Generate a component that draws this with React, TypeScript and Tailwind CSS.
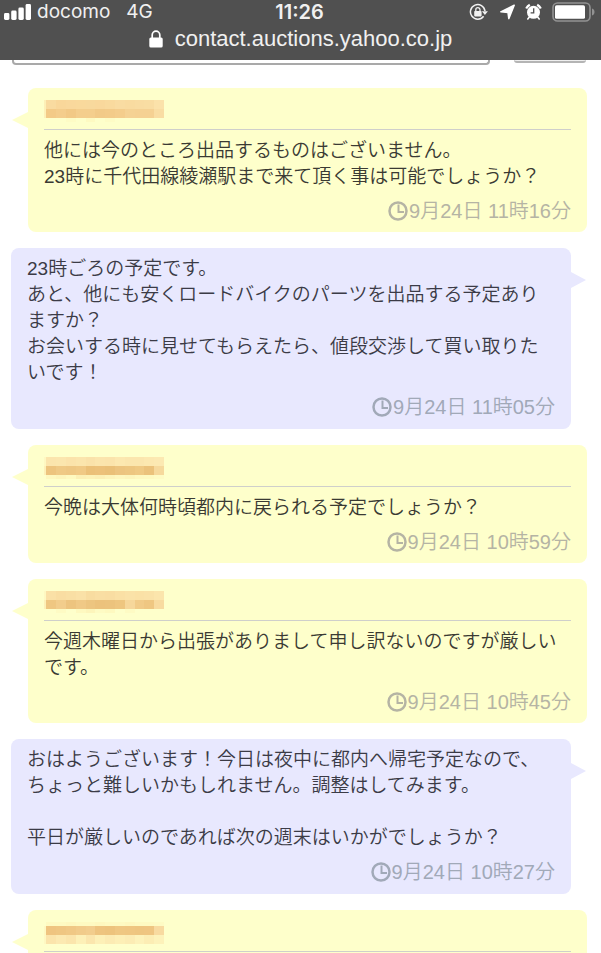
type Message = {
  id: number;
  from: "seller" | "me";
  body: string;
  time: string;
  mosaic?: string[][];
};

const BLANK_ROW = Array<string>(13).fill("#feffcb");

// Masked user names, painted as rows of blocks; the top and bottom rows are half height
const MOSAICS = {
  high: [
    BLANK_ROW,
    ["#fdf0b8", "#f9dba0", "#f9d79a", "#f9d89c", "#f9d99c", "#f8d99d", "#f9d89c", "#f9da9e", "#f9dca2", "#f9dba0", "#f9dca2", "#f9dda3", "#fbe2aa"],
    ["#fdf0b8", "#f3ca87", "#f4cd8c", "#f2c986", "#f4ce8d", "#f4ce8d", "#f2ca88", "#f3cb89", "#f4cd8c", "#f5d294", "#f5d193", "#f5d193", "#f9dda3"],
    ["#feffcb", "#feffcb", "#feffcb", "#fefcc6", "#feffcb", "#fefac2", "#feffcb", "#fefcc6", "#feffcb", "#feffcb", "#feffcb", "#feffcb", "#feffcb"],
  ],
  mid: [
    BLANK_ROW,
    ["#fef8c2", "#fbe5ad", "#fbe6ae", "#fbe3ab", "#fbe5ad", "#fae2aa", "#fbe5ad", "#fbe4ac", "#fce8b0", "#fbe6ae", "#fbe6ae", "#fce8b0", "#fce9b2"],
    ["#fdf0b8", "#edc47e", "#efc985", "#eec783", "#f0c985", "#ebc078", "#ecc17a", "#eac078", "#ecc47f", "#edc680", "#efc983", "#ebc27b", "#f6d99c"],
    ["#feffcb", "#fef8bf", "#fdf5bb", "#fef9c0", "#fcf0b5", "#fdf2b7", "#fcf0b5", "#fdf4ba", "#fef7be", "#fdf5bb", "#fef8bf", "#fef9c0", "#fefbc4"],
  ],
  dim: [
    BLANK_ROW,
    ["#fef8c2", "#fae0a6", "#f9dda2", "#f9dfa4", "#fae1a7", "#f8dca0", "#f9dea3", "#f9dda2", "#fae0a5", "#fae2a8", "#fae1a6", "#fae2a8", "#fbe5ac"],
    ["#fdf0b8", "#efc782", "#f2cd8c", "#edc47f", "#f0c986", "#edc580", "#ecc27c", "#ecc37d", "#eec680", "#f6d79b", "#f1cb88", "#efc782", "#f8dba0"],
    ["#feffcb", "#feffcb", "#fefbc4", "#feffcb", "#fef9c0", "#fdf5bb", "#fefbc4", "#fef9c0", "#feffcb", "#fefbc4", "#feffcb", "#feffcb", "#feffcb"],
  ],
  // no half row on top of the blocks, the name sits lower here
  low: [
    ["#feffcb", "#fefac2", "#fefac2", "#fef8bf", "#fefac2", "#fefac2", "#fef8bf", "#fefac2", "#fefac2", "#fef8bf", "#fefac2", "#fefac2", "#fefbc4"],
    ["#fef8c2", "#efc480", "#efc682", "#f0c885", "#f1cb8a", "#f2cd8d", "#eec47f", "#edc37d", "#efc782", "#efc681", "#eec580", "#efc581", "#f8daa0"],
    ["#fef8c2", "#fbe4ab", "#fce9b1", "#fbe5ac", "#fdf0b7", "#fbe6ad", "#fdf0b7", "#fcebb3", "#fdefb6", "#fcecb4", "#fdf2ba", "#fcedb4", "#fdf2ba"],
    BLANK_ROW,
  ],
};

const MESSAGES: Message[] = [
  {
    id: 6,
    from: "seller",
    body: "他には今のところ出品するものはございません。\n23時に千代田線綾瀬駅まで来て頂く事は可能でしょうか？",
    time: "9月24日 11時16分",
    mosaic: MOSAICS.high,
  },
  {
    id: 5,
    from: "me",
    body: "23時ごろの予定です。\nあと、他にも安くロードバイクのパーツを出品する予定ありますか？\nお会いする時に見せてもらえたら、値段交渉して買い取りたいです！",
    time: "9月24日 11時05分",
  },
  {
    id: 4,
    from: "seller",
    body: "今晩は大体何時頃都内に戻られる予定でしょうか？",
    time: "9月24日 10時59分",
    mosaic: MOSAICS.mid,
  },
  {
    id: 3,
    from: "seller",
    body: "今週木曜日から出張がありまして申し訳ないのですが厳しいです。",
    time: "9月24日 10時45分",
    mosaic: MOSAICS.dim,
  },
  {
    id: 2,
    from: "me",
    body: "おはようございます！今日は夜中に都内へ帰宅予定なので、ちょっと難しいかもしれません。調整はしてみます。\n\n平日が厳しいのであれば次の週末はいかがでしょうか？",
    time: "9月24日 10時27分",
  },
  { id: 1, from: "seller", body: "", time: "", mosaic: MOSAICS.low },
];

function SignalIcon() {
  return (
    <svg width="28" height="18" viewBox="0 0 28 18" fill="#fff" aria-hidden="true">
      <rect x="0" y="10" width="5.4" height="7" rx="1.4" />
      <rect x="7.2" y="7.5" width="5.4" height="9.5" rx="1.4" />
      <rect x="14.4" y="4.5" width="5.4" height="12.5" rx="1.4" />
      <rect x="21.6" y="1" width="5.4" height="16" rx="1.4" />
    </svg>
  );
}

function RotationLockIcon() {
  return (
    <svg width="19" height="18" viewBox="0 0 19 18" fill="none" aria-hidden="true">
      <path d="M14.6 13.2A7.3 7.3 0 1 1 16 8" stroke="#f2f2f2" strokeWidth="1.5" />
      <path d="M12.9 8.2h6l-3 3.8z" fill="#f2f2f2" />
      <rect x="5.2" y="8" width="7.4" height="5.4" rx="0.8" fill="#f2f2f2" />
      <path d="M6.8 8.4V6.7a2.1 2.1 0 0 1 4.2 0v1.7" stroke="#f2f2f2" strokeWidth="1.3" />
    </svg>
  );
}

function LocationIcon() {
  return (
    <svg width="15" height="16" viewBox="0 0 15 16" fill="#fff" aria-hidden="true">
      <path d="M14.2 1.2 8.8 14.6 8 8.6.8 7.8z" stroke="#fff" strokeWidth="1.5" strokeLinejoin="round" />
    </svg>
  );
}

function AlarmIcon() {
  return (
    <svg width="17" height="18" viewBox="0 0 17 18" fill="none" aria-hidden="true">
      <circle cx="8.5" cy="9.3" r="6.5" fill="#fff" />
      <path d="M1.2 5.4a9 9 0 0 1 3.6-3.7M15.8 5.4a9 9 0 0 0-3.6-3.7" stroke="#fff" strokeWidth="2.2" />
      <path d="M4.2 14.2 2.8 16M12.8 14.2l1.4 1.8" stroke="#fff" strokeWidth="1.6" strokeLinecap="round" />
      <path d="M8.7 5.2v4.6H5.6" stroke="#505050" strokeWidth="1.3" />
    </svg>
  );
}

function BatteryIcon() {
  return (
    <svg width="43" height="20" viewBox="0 0 43 20" fill="none" aria-hidden="true">
      <rect x="1" y="1" width="37" height="18" rx="4.5" stroke="#929292" strokeWidth="1.6" />
      <rect x="3" y="3.2" width="30" height="13.6" rx="1.6" fill="#fff" />
      <path d="M40 6.5c1.6.5 2.5 1.9 2.5 3.5s-.9 3-2.5 3.5z" fill="#929292" />
    </svg>
  );
}

function LockIcon() {
  return (
    <svg width="14" height="18" viewBox="0 0 14 18" fill="none" aria-hidden="true">
      <rect x="0.3" y="7.5" width="13.4" height="10" rx="1.6" fill="#fff" />
      <path d="M3.2 8V5a3.8 3.8 0 0 1 7.6 0v3" stroke="#fff" strokeWidth="1.7" />
    </svg>
  );
}

function ClockIcon() {
  return (
    <svg width="20" height="20" viewBox="0 0 20 20" fill="none" stroke="currentColor" strokeWidth="2.5" aria-hidden="true">
      <circle cx="10" cy="10" r="8.5" />
      <path d="M10.5 3.5V11H16" strokeWidth="2" />
    </svg>
  );
}

function Mosaic({ rows }: { rows: string[][] }) {
  return (
    <svg width="121" height="26" viewBox="0 0 121 26" shapeRendering="crispEdges" role="img" aria-label="ユーザー名">
      {rows.map((row, y) =>
        row.map((fill, x) => (
          <rect
            key={`${x}-${y}`}
            x={x === 0 ? 0 : x * 9.8 - 7.4}
            y={[0, 4, 13, 22][y]}
            width={x === 0 ? 3 : 10}
            height={y === 0 || y === 3 ? 4 : 9}
            fill={fill}
          />
        ))
      )}
    </svg>
  );
}

function Time({ value }: { value: string }) {
  return (
    <div className="mt-2 flex h-[26px] items-center justify-end">
      <ClockIcon />
      <time className="ml-px text-[20px] font-[350] leading-[26px]">{value}</time>
    </div>
  );
}

function SellerMessage({ message }: { message: Message }) {
  return (
    <li className="relative ml-7 mr-[14px] min-h-[118px] rounded-lg bg-[#feffcb] px-4 py-2">
      <svg className="absolute -left-4 top-6" width="16" height="16" viewBox="0 0 16 16" aria-hidden="true">
        <path d="M16 0v16L0 8z" fill="#feffcb" />
      </svg>
      <div className={`flex h-[34px] border-b border-[#cfcfcb] ${message.body ? "items-start" : "items-center"}`}>
        {message.mosaic && <Mosaic rows={message.mosaic} />}
      </div>
      <p className="mt-2 whitespace-pre-line text-[19px] font-[350] leading-[26px] text-[#3a3a33]">{message.body}</p>
      <div className="text-[#b5b4a4]">{message.time && <Time value={message.time} />}</div>
    </li>
  );
}

function MyMessage({ message }: { message: Message }) {
  return (
    <li className="relative ml-[11px] mr-[30px] rounded-lg bg-[#e8e8fe] px-4 pb-[9px] pt-2">
      <svg className="absolute -right-4 top-6" width="16" height="16" viewBox="0 0 16 16" aria-hidden="true">
        <path d="M0 0v16l15-8z" fill="#e8e8fe" />
      </svg>
      <p className="whitespace-pre-line text-[19px] font-[350] leading-[26px] text-[#3b3b46]">{message.body}</p>
      <div className="text-[#a1a9b8]">
        <Time value={message.time} />
      </div>
    </li>
  );
}

export default function App() {
  return (
    <div className="flex h-screen flex-col overflow-hidden bg-white font-['Liberation_Sans','Noto_Sans_CJK_JP',sans-serif]">
      <header className="h-[60px] shrink-0 bg-[#505050] text-[#f0f0f0]">
        <div className="grid h-6 grid-cols-[1fr_auto_1fr] items-center pl-1 pr-[6px] font-[Inter,sans-serif]">
          <div className="flex items-center text-[19px] leading-6">
            <SignalIcon />
            <span className="ml-[5px]">docomo</span>
            <span className="ml-4">4G</span>
          </div>
          <span className="text-[20px] font-semibold leading-6">11:26</span>
          <div className="flex items-center justify-end">
            <RotationLockIcon />
            <span className="ml-3">
              <LocationIcon />
            </span>
            <span className="ml-2.5">
              <AlarmIcon />
            </span>
            <span className="ml-2.5">
              <BatteryIcon />
            </span>
          </div>
        </div>
        <div className="flex h-[30px] items-center justify-center gap-3">
          <LockIcon />
          <span className="text-[22px] leading-[30px]">contact.auctions.yahoo.co.jp</span>
        </div>
      </header>

      <main className="min-h-0 flex-1 overflow-hidden">
        {/* Bottom edge of the reply form, scrolled under the address bar */}
        <form className="flex items-start gap-6 pl-3 pr-[15px]">
          <textarea
            aria-label="メッセージ"
            className="h-[5px] min-w-0 flex-1 resize-none overflow-hidden rounded-b-[4px] border-2 border-t-0 border-[#a9a9a9] bg-white"
          />
          <button type="button" aria-label="送信" className="h-[3px] w-[72px] rounded-b-[4px] border-b-2 border-[#b4b4b4] bg-[#eeeeee]" />
        </form>

        <ul className="mt-[23px] flex flex-col gap-4">
          {MESSAGES.map((message) =>
            message.from === "seller" ? (
              <SellerMessage key={message.id} message={message} />
            ) : (
              <MyMessage key={message.id} message={message} />
            )
          )}
        </ul>
      </main>
    </div>
  );
}
